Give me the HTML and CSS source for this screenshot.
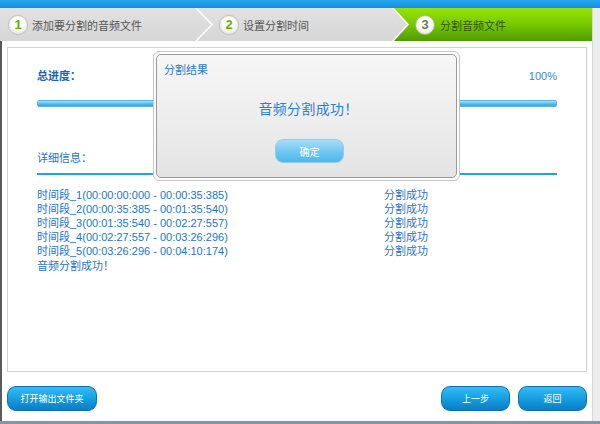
FILE: index.html
```html
<!DOCTYPE html>
<html lang="zh-CN">
<head>
<meta charset="utf-8">
<title>分割音频文件</title>
<link rel="stylesheet" href="styles.css">
</head>
<body>
<div class="app">
  <div class="topbar"></div>
  <div class="body">
    <div class="main">
      <div class="steps">
        <div class="step step-1"><span class="num">1</span><span class="label">添加要分割的音频文件</span></div>
        <div class="step step-2"><span class="num">2</span><span class="label">设置分割时间</span></div>
        <div class="step step-3 active"><span class="num">3</span><span class="label">分割音频文件</span></div>
      </div>
      <div class="content">
        <div class="panel">
          <div class="row-head">
            <span class="total">总进度：</span>
            <span class="percent">100%</span>
          </div>
          <div class="progress"><div class="progress-fill"></div></div>
          <div class="detail-title">详细信息：</div>
          <div class="detail-line"></div>
          <div class="log">
            <span>时间段_1(00:00:00:000 - 00:00:35:385)</span><span>分割成功</span>
            <span>时间段_2(00:00:35:385 - 00:01:35:540)</span><span>分割成功</span>
            <span>时间段_3(00:01:35:540 - 00:02:27:557)</span><span>分割成功</span>
            <span>时间段_4(00:02:27:557 - 00:03:26:296)</span><span>分割成功</span>
            <span>时间段_5(00:03:26:296 - 00:04:10:174)</span><span>分割成功</span>
            <span class="done">音频分割成功！</span><span></span>
          </div>
          <div class="dialog">
            <div class="dialog-inner">
              <div class="dialog-title">分割结果</div>
              <div class="dialog-msg">音频分割成功！</div>
              <button class="dialog-btn">确定</button>
            </div>
          </div>
        </div>
        <div class="footer">
          <button class="btn">打开输出文件夹</button>
          <div class="footer-right">
            <button class="btn btn-sm">上一步</button>
            <button class="btn btn-sm">返回</button>
          </div>
        </div>
      </div>
    </div>
    <div class="side"></div>
  </div>
  <div class="bottombar"></div>
</div>
</body>
</html>
```
FILE: styles.css
```css
* { box-sizing: border-box; }
html, body { margin: 0; padding: 0; }
body {
  width: 600px;
  height: 424px;
  overflow: hidden;
  background: #fff;
  font-family: "Liberation Sans", "Noto Sans CJK SC", sans-serif;
}
.app { display: flex; flex-direction: column; width: 600px; height: 424px; }
.topbar {
  height: 8px;
  background: linear-gradient(#2aa8ee, #128fde);
}
.body { display: flex; flex: 1; min-height: 0; }
.main { width: 592px; display: flex; flex-direction: column; }
.side {
  width: 8px;
  background: #ededed;
  border-left: 1px solid #d6d6d6;
}
.bottombar { height: 3px; background: #7e97a4; }

/* steps */
.steps {
  display: flex;
  height: 33px;
  background: #fff;
}
.step {
  display: flex;
  align-items: center;
  height: 33px;
  background: linear-gradient(#e2e2e2, #d6d6d6);
  font-size: 11px;
  color: #555;
}
.step-1 {
  width: 212px;
  padding-left: 8px;
  clip-path: polygon(0 0, 195px 0, 211px 50%, 195px 100%, 0 100%);
}
.step-2 {
  width: 211px;
  margin-left: -15px;
  padding-left: 22px;
  clip-path: polygon(0 0, 195px 0, 210px 50%, 195px 100%, 0 100%, 16px 50%);
}
.step-3 {
  width: 198px;
  margin-left: -14px;
  padding-left: 21px;
  clip-path: polygon(0 0, 100% 0, 100% 100%, 0 100%, 15px 50%);
  background: linear-gradient(#95e408, #78c800 50%, #4d9c00);
  color: #35540f;
}
.num {
  width: 20px;
  height: 20px;
  border-radius: 50%;
  background: radial-gradient(circle at 50% 40%, #ffffff 40%, #e4e4e4 80%, #cfcfcf);
  border: 1px solid #c4c4c4;
  box-shadow: 0 0 1px rgba(0,0,0,0.15);
  display: flex;
  align-items: center;
  justify-content: center;
  font-family: "Liberation Sans", sans-serif;
  font-weight: bold;
  font-size: 13px;
  color: #62b000;
  margin-right: 4px;
}
.step-3 .num { color: #6b7d55; border-color: #9fc86a; margin-right: 5px; }

/* content */
.content {
  flex: 1;
  border-left: 2px solid #5a5a5a;
  display: flex;
  flex-direction: column;
  padding: 6px 0 10px 5px;
}
.panel {
  position: relative;
  width: 580px;
  height: 325px;
  border: 1px solid #d2d2d2;
  padding: 21px 29px 0 29px;
  color: #1f74c6;
  font-size: 11px;
}
.row-head {
  display: flex;
  justify-content: space-between;
  line-height: 14px;
  height: 14px;
}
.total { font-weight: bold; color: #1565b8; }
.percent { color: #2b8ae0; font-size: 11px; }
.progress {
  margin-top: 17px;
  height: 7px;
  border: 1px solid #5eb4e4;
  border-radius: 2px;
  background: #fff;
}
.progress-fill {
  height: 100%;
  width: 100%;
  background: linear-gradient(#a6e0fa, #4cbcef 60%, #2ea8e6);
}
.detail-title {
  margin-top: 44px;
  line-height: 14px;
  height: 14px;
}
.detail-line {
  margin-top: 8px;
  height: 2px;
  background: #1ea3ea;
}
.log {
  margin-top: 13px;
  display: grid;
  grid-template-columns: 347px auto;
  line-height: 14px;
  font-size: 11px;
  color: #1f74c6;
}
.done, .dialog-msg {
  font-family: "Noto Sans CJK TC", "Noto Sans CJK SC", sans-serif;
  text-spacing-trim: space-all;
}

/* dialog */
.dialog {
  position: absolute;
  left: 145px;
  top: 3px;
  width: 307px;
  height: 130px;
  border: 1px solid #c6c6c6;
  border-radius: 6px;
  background: #fdfdfd;
  padding: 2px;
}
.dialog-inner {
  height: 100%;
  border: 1px solid #9a9a9a;
  border-radius: 5px;
  background: linear-gradient(#f7f7f7, #e4e4e4);
  display: flex;
  flex-direction: column;
  align-items: center;
  padding-top: 8px;
}
.dialog-title {
  align-self: flex-start;
  margin-left: 7px;
  font-size: 11px;
  line-height: 14px;
  color: #2878c8;
}
.dialog-msg {
  margin-top: 22px;
  margin-left: 4px;
  font-size: 14px;
  line-height: 18px;
  color: #2b7fd0;
  letter-spacing: 0.3px;
}
.dialog-btn {
  margin-top: 22px;
  margin-left: 6px;
  width: 69px;
  height: 24px;
  border: 1px solid #9cc9e2;
  border-radius: 8px;
  background: linear-gradient(#a8def8, #72c8f2 50%, #4db7ec);
  color: #fff;
  font-family: "Noto Sans CJK SC", sans-serif;
  font-size: 10px;
  padding: 0;
}

/* footer */
.footer {
  margin-top: 14px;
  display: flex;
  justify-content: space-between;
  width: 580px;
}
.footer-right { display: flex; gap: 8px; }
.btn {
  width: 90px;
  height: 25px;
  border: 1px solid #1071ae;
  border-radius: 9px;
  background: linear-gradient(#33bdf4, #169fe2 50%, #0a7cc4);
  color: #fff;
  font-family: "Noto Sans CJK SC", sans-serif;
  font-size: 9px;
  padding: 0;
}
.btn-sm { width: 69px; }
```
